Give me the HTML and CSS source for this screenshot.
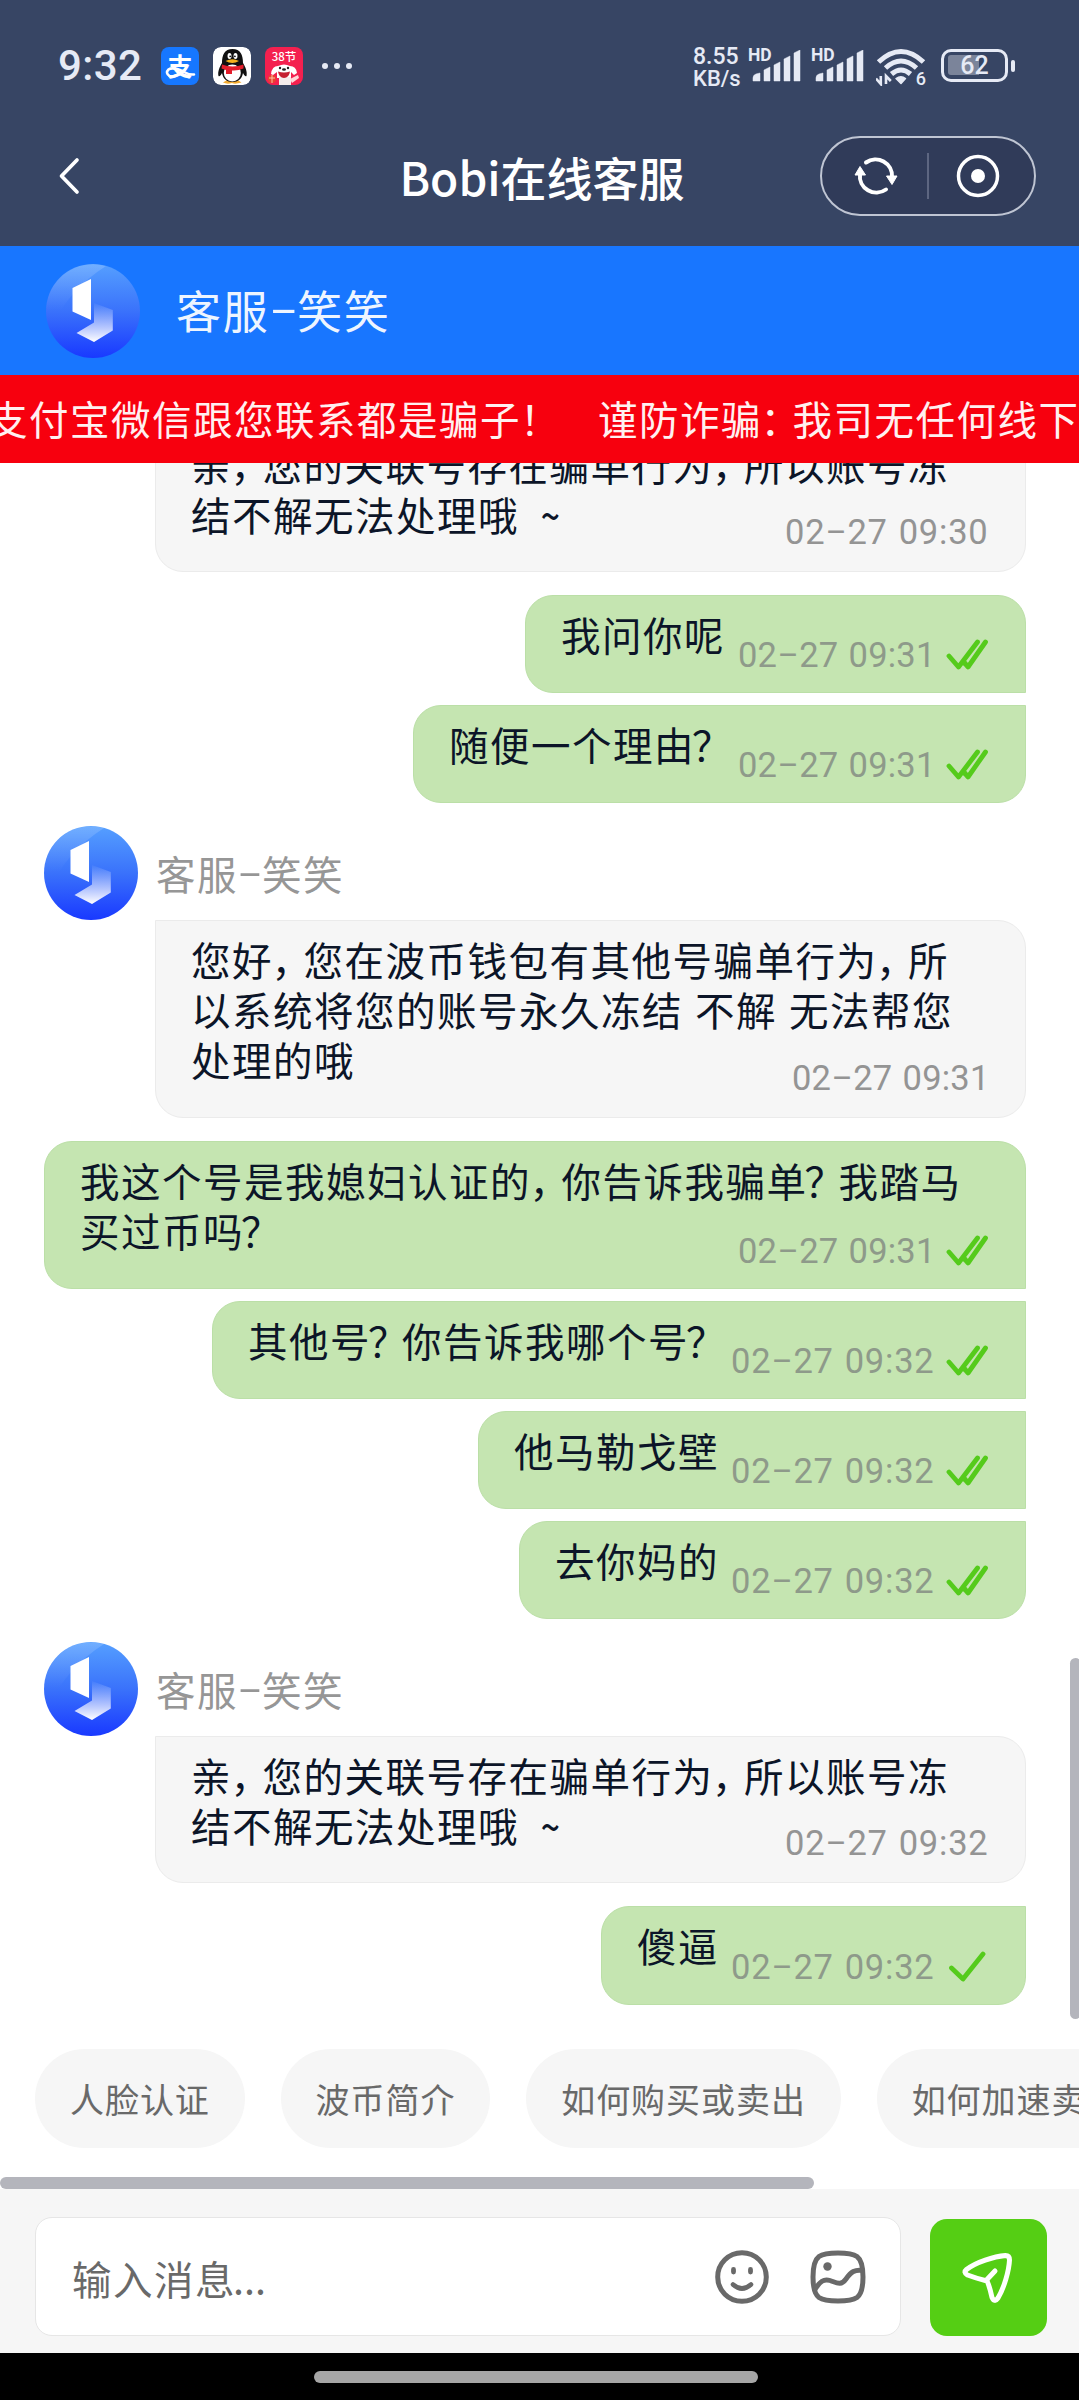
FILE: index.html
```html
<!DOCTYPE html>
<html lang="zh-CN">
<head>
<meta charset="utf-8">
<title>Bobi在线客服</title>
<link rel="stylesheet" href="styles.css">
</head>
<body>
<svg class="defs" width="0" height="0" aria-hidden="true">
  <defs>
    <linearGradient id="disc" x1="0" y1="0" x2="0" y2="1">
      <stop offset="0" stop-color="#559fff"/><stop offset=".5" stop-color="#3a72fb"/><stop offset="1" stop-color="#1939ff"/>
    </linearGradient>
    <linearGradient id="shine" x1="0" y1="0" x2="0" y2="1">
      <stop offset="0" stop-color="#fff" stop-opacity=".17"/><stop offset=".7" stop-color="#fff" stop-opacity="0"/>
    </linearGradient>
    <linearGradient id="fold" x1="0" y1="0" x2="0" y2="1">
      <stop offset="0" stop-color="#fff" stop-opacity=".03"/><stop offset=".45" stop-color="#fff" stop-opacity=".48"/><stop offset="1" stop-color="#fff"/>
    </linearGradient>
    <symbol id="logo" viewBox="0 0 94 94">
      <circle cx="47" cy="47" r="47" fill="url(#disc)"/>
      <path d="M60 2A47 47 0 0 0 4 66Q22 26 60 2Z" fill="url(#shine)"/>
      <path d="M48 39L66.8 46V66.5L48 78L30.5 69L48 58.5Z" fill="url(#fold)"/>
      <path d="M26.5 24L45 15V56L26.5 47.5Z" fill="#fff"/>
    </symbol>
    <symbol id="read" viewBox="0 0 42 32">
      <path d="M3 17L12.5 28L31.5 3M19 24.5L22 28L39.5 3" fill="none" stroke="#55cb1b" stroke-width="4.8" stroke-linecap="round" stroke-linejoin="round"/>
      <path d="M17 26L20 22" stroke="#55cb1b" stroke-width="4"/>
    </symbol>
    <symbol id="sent" viewBox="0 0 42 32">
      <path d="M5.500 17L17 28L37 3" fill="none" stroke="#55cb1b" stroke-width="4.8" stroke-linecap="round" stroke-linejoin="round"/>
    </symbol>
    <symbol id="signal" viewBox="0 0 50 32">
      <path d="M1 31V28Q1 25 4 24L8 23V31ZM12 31V20L18 17V31ZM22 31V15L28 12V31ZM32 31V9L38 6V31ZM42 31V3L48 0V31Z" fill="#e6eaf5" stroke="#e6eaf5" stroke-width=".5" stroke-linejoin="round"/>
    </symbol>
  </defs>
</svg>
<div class="phone">
  <header class="top">
    <div class="status">
      <span class="clock">9:32</span>
      <div class="apps">
        <span class="app alipay"><span class="zhi">支</span><svg class="swash" viewBox="0 0 38 38"><path d="M22 24Q14 31 8.500 29Q4 26 7.500 22.500Q12 19.500 22 24.500Q28 28 33 27.500" fill="none" stroke="#fff" stroke-width="2.600" stroke-linecap="round"/></svg></span>
        <svg class="app" viewBox="0 0 38 38">
          <rect width="38" height="38" rx="8" fill="#fff"/>
          <path d="M10 35.5Q14 32 19 33Q25 32 28.500 35.500Q22 37.500 19 36Q14 37.500 10 35.500Z" fill="#f4ac32"/>
          <path d="M19.500 2C11.500 2 9 8 9 16C6.500 20 4.500 25 5.500 29C6.500 30 8 28 9 26C10 32 14 35 19.500 35C25 35 29 32 30 26C31 28 32.500 30 33.500 29C34.500 25 32.500 20 30 16C30 8 27.500 2 19.500 2Z" fill="#111"/>
          <ellipse cx="19.300" cy="26" rx="8.500" ry="8.500" fill="#fff"/>
          <ellipse cx="16.500" cy="9" rx="2" ry="3" fill="#fff"/><ellipse cx="22.500" cy="9" rx="2" ry="3" fill="#fff"/>
          <circle cx="17.200" cy="9.300" r=".9" fill="#111"/><circle cx="21.900" cy="9.300" r=".9" fill="#111"/>
          <path d="M12.500 14Q19.500 10.500 26 14Q19.500 18 12.500 14Z" fill="#f4b21e"/>
          <path d="M9 17.500Q19.500 21.500 30.500 17.500V21.500Q25 24 19 23.500V27H13V23L8.500 21.500Z" fill="#e31d2b"/>
        </svg>
        <span class="app mall">
          <span class="fest">38节</span>
          <svg class="dog" viewBox="0 0 38 22">
            <path d="M6 11Q7 3 13 3Q19 0 25 3Q31 3 32 10L29 12L26 9V15H12V9L8 12Z" fill="#fff"/>
            <path d="M14 22V14H26V22Z" fill="#f4eded"/><path d="M25 16L33 12L34 15L27 20Z" fill="#ffd7d9"/>
            <path d="M13 8.500Q19 10.500 25 8.500Q24 15 19 15Q14 15 13 8.500Z" fill="#c52031"/>
            <circle cx="15" cy="5" r="1.200" fill="#222"/><circle cx="23" cy="5" r="1.200" fill="#222"/><ellipse cx="19" cy="6.500" rx="2" ry="1.300" fill="#222"/>
            <circle cx="7" cy="16" r="4" fill="#e8432f"/><path d="M4 15H10M7 12V20" stroke="#ffc2a0" stroke-width="1"/>
          </svg>
        </span>
      </div>
      <svg class="more" width="30" height="8" viewBox="0 0 30 8"><g fill="#e6eaf5"><circle cx="3" cy="4" r="3"/><circle cx="15" cy="4" r="3"/><circle cx="27" cy="4" r="3"/></g></svg>
      <div class="speed"><span>8.55</span><span>KB/s</span></div>
      <div class="cell"><span class="hd">HD</span><svg class="bars"><use href="#signal"/></svg></div>
      <div class="cell"><span class="hd">HD</span><svg class="bars"><use href="#signal"/></svg></div>
      <div class="wifi">
        <svg width="50" height="38" viewBox="0 0 50 38">
          <g fill="none" stroke="#e6eaf5" stroke-width="5"><path d="M2.500 14Q25 -7 47.500 14"/><path d="M9.500 20Q25 6 40.500 20"/><path d="M15.500 26Q25 18 34.500 26"/></g>
          <path d="M20 30.500Q25 27 29.500 30.500L25 35.500Z" fill="#e6eaf5" stroke="#e6eaf5" stroke-width="1.500" stroke-linejoin="round"/>
          <path d="M4.800 28V36L0 30.500M10 36V28L14.800 33" fill="none" stroke="#e6eaf5" stroke-width="2.600"/>
        </svg>
        <span class="six">6</span>
      </div>
      <div class="battery"><span>62</span></div>
      <i class="nub"></i>
    </div>
    <div class="nav">
      <svg class="back" width="22" height="38" viewBox="0 0 22 38"><path d="M19 3L3.500 19L19 35" fill="none" stroke="#fff" stroke-width="3.700" stroke-linecap="round" stroke-linejoin="round"/></svg>
      <h1>Bobi在线客服</h1>
      <div class="capsule">
        <svg width="46" height="42" viewBox="0 0 46 42">
          <g fill="none" stroke="#fff" stroke-width="4" stroke-linecap="round"><path d="M13 7.500A16.500 16.500 0 0 1 39 22"/><path d="M33 34.500A16.500 16.500 0 0 1 7 19"/></g>
          <path d="M33.500 21H44L39 29.500ZM2 20H12.500L7 11.500Z" fill="#fff" stroke="#fff" stroke-linejoin="round"/>
        </svg>
        <i class="split"></i>
        <svg width="44" height="44" viewBox="0 0 44 44"><circle cx="22" cy="22" r="19.500" fill="none" stroke="#fff" stroke-width="3.500"/><circle cx="22" cy="22" r="7" fill="#fff"/></svg>
      </div>
    </div>
  </header>

  <div class="agent">
    <svg class="avatar"><use href="#logo"/></svg>
    <span>客服<b class="dash">-</b>笑笑</span>
  </div>

  <div class="marquee">
    <span>支付宝微信跟您联系都是骗子<b class="ex">！</b></span>
    <span class="second">谨防诈骗<b class="cm">：</b>我司无任何线下</span>
  </div>

  <main class="chat">
    <section class="group">
      <div class="bubble in tall2">
        <p>亲<b class="cm">，</b>您的关联号存在骗单行为<b class="cm">，</b>所以账号冻<br>结不解无法处理哦&nbsp; <b class="tilde">~</b></p>
        <time>02<b class="hy">-</b>27 09:30</time>
      </div>
    </section>
    <section class="group">
      <div class="bubble out first w501"><p>我问你呢</p><time class="one">02<b class="hy">-</b>27 09:31</time><svg class="tick"><use href="#read"/></svg></div>
      <div class="bubble out last w613"><p>随便一个理由<b class="qm">？</b></p><time class="one">02<b class="hy">-</b>27 09:31</time><svg class="tick"><use href="#read"/></svg></div>
    </section>
    <section class="group">
      <div class="who"><svg class="avatar"><use href="#logo"/></svg><span>客服<b class="dash">-</b>笑笑</span></div>
      <div class="bubble in tall3">
        <p>您好<b class="cm">，</b>您在波币钱包有其他号骗单行为<b class="cm">，</b>所<br>以系统将您的账号永久冻结 不解 无法帮您<br>处理的哦</p>
        <time class="one">02<b class="hy">-</b>27 09:31</time>
      </div>
    </section>
    <section class="group">
      <div class="bubble out first w982 two">
        <p>我这个号是我媳妇认证的<b class="cm">，</b>你告诉我骗单<b class="qm">？</b>我踏马<br>买过币吗<b class="qm">？</b></p>
        <time class="one">02<b class="hy">-</b>27 09:31</time><svg class="tick"><use href="#read"/></svg>
      </div>
      <div class="bubble out mid w814"><p>其他号<b class="qm">？</b>你告诉我哪个号<b class="qm">？</b></p><time>02<b class="hy">-</b>27 09:32</time><svg class="tick"><use href="#read"/></svg></div>
      <div class="bubble out mid w548"><p>他马勒戈壁</p><time>02<b class="hy">-</b>27 09:32</time><svg class="tick"><use href="#read"/></svg></div>
      <div class="bubble out last w507"><p>去你妈的</p><time>02<b class="hy">-</b>27 09:32</time><svg class="tick"><use href="#read"/></svg></div>
    </section>
    <section class="group">
      <div class="who"><svg class="avatar"><use href="#logo"/></svg><span>客服<b class="dash">-</b>笑笑</span></div>
      <div class="bubble in tall2">
        <p>亲<b class="cm">，</b>您的关联号存在骗单行为<b class="cm">，</b>所以账号冻<br>结不解无法处理哦&nbsp; <b class="tilde">~</b></p>
        <time>02<b class="hy">-</b>27 09:32</time>
      </div>
    </section>
    <section class="group">
      <div class="bubble out last w425"><p>傻逼</p><time>02<b class="hy">-</b>27 09:32</time><svg class="tick"><use href="#sent"/></svg></div>
    </section>
    <i class="vbar"></i>
  </main>

  <div class="quick">
    <button>人脸认证</button><button>波币简介</button><button>如何购买或卖出</button><button>如何加速卖出</button>
  </div>
  <i class="hbar"></i>

  <footer class="compose">
    <div class="field">
      <span class="hint">输入消息<b class="dots">...</b></span>
      <svg width="54" height="56" viewBox="0 0 54 56" fill="none" stroke="#696969" stroke-linecap="round">
        <circle cx="27" cy="28" r="24.300" stroke-width="5"/><path d="M18 35.500Q27 43.500 36 35.500" stroke-width="4.600"/>
        <path d="M18.500 20.500V23M35.500 20.500V23" stroke-width="4.800"/>
      </svg>
      <svg width="56" height="54" viewBox="0 0 56 54" fill="none" stroke="#696969" stroke-width="5">
        <path d="M28 3Q42 3 47 6.500Q53 11 53 27Q53 43 47 47.500Q42 51 28 51Q14 51 9 47.500Q3 43 3 27Q3 11 9 6.500Q14 3 28 3Z"/>
        <path d="M4 41C10 31 14 28.500 20 30.500C27 33 31 36 36 29C41 22 45 19 53 20.500"/>
        <circle cx="17.500" cy="16.500" r="4.200" fill="#696969" stroke="none"/>
      </svg>
    </div>
    <div class="send">
      <svg width="52" height="52" viewBox="0 0 52 52" fill="none" stroke="#fff" stroke-width="5" stroke-linecap="round" stroke-linejoin="round">
        <path d="M5.500 17.500C15 10 33 4.500 44.500 3.500Q48.500 3.500 48.500 8C48 19 43 36 37 46Q33.500 51 31 45.500C29.500 39 28.500 34 26 29C20 27.500 13 25.500 6.500 23Q2 20.500 5.500 17.500Z"/><path d="M26 27.500L34 19"/>
      </svg>
    </div>
  </footer>
  <div class="gesture"><i></i></div>
</div>
</body>
</html>
```
FILE: styles.css
```css
* { box-sizing: border-box; }
body { margin: 0; background: #fff; font-family: "Noto Sans CJK SC", sans-serif; }
p, h1 { margin: 0; }
b { font-weight: inherit; }
svg { display: block; flex: none; }
.defs { position: absolute; }
.phone { width: 1079px; height: 2400px; display: flex; flex-direction: column; overflow: hidden; }
.phone > * { flex: none; }

/* status bar and title bar */
.top { height: 246px; background: #374564; color: #e6eaf5; }
.status { height: 128px; padding: 46px 0 0 58px; display: flex; align-items: flex-start; }
.clock { width: 103px; font: 500 42px/40px Roboto, sans-serif; letter-spacing: .4px; }
.apps { display: flex; gap: 14px; padding-top: 1px; }
.app { width: 38px; height: 38px; border-radius: 8px; }
.alipay { background: #1677ff; color: #fff; display: grid; justify-items: center; }
.alipay > * { grid-area: 1 / 1; }
.zhi { font: 700 25px/36px "Noto Sans CJK SC", sans-serif; height: 38px; }
.swash { width: 38px; height: 38px; }
.mall { background: #f4204f; color: #fff; }
.fest { display: block; text-align: center; font: 500 11.500px/18px "Noto Sans CJK SC", sans-serif; height: 16px; }
.dog { width: 38px; height: 22px; }
.more { margin: 16px 0 0 19px; }
.speed { margin: 0 0 0 341px; width: 55px; display: flex; flex-direction: column; font: 500 23px/21.500px Roboto, sans-serif; }
.speed span:last-child { font-size: 22px; }
.cell { width: 63px; display: grid; }
.cell > * { grid-area: 1 / 1; }
.hd { font: 700 17.500px/17px Roboto, sans-serif; padding-top: 1px; }
.bars { width: 50px; height: 32px; margin: 4px 0 0 4px; }
.wifi { width: 67px; display: grid; padding: 2px 0 0 2px; }
.wifi > * { grid-area: 1 / 1; }
.six { justify-self: end; align-self: end; font: 500 18px/17px Roboto, sans-serif; padding-right: 15px; margin-bottom: -1px; }
.battery { width: 67px; height: 33px; margin-top: 3px; border: 3.500px solid #e6eaf5; border-radius: 10px; padding: 3px 4px; }
.battery span { display: block; height: 20px; border-radius: 3px; background: linear-gradient(90deg, #7b849a 58%, transparent 58%); text-align: center; font: 500 25px/21px Roboto, sans-serif; }
.nub { width: 4px; height: 12px; margin: 14px 0 0 3px; border-radius: 2px; background: #e6eaf5; }
.nav { height: 118px; display: grid; grid-template-columns: 260px 1fr 260px; padding-top: 8px; align-items: start; color: #fff; }
.back { margin: 21px 0 0 58px; }
h1 { text-align: center; font-size: 46px; line-height: 80px; font-weight: 500; padding-left: 5px; }
.capsule { width: 216px; height: 80px; border: 2px solid #bfc5d3; border-radius: 40px; background: #303b59; display: flex; align-items: center; padding-left: 31px; margin-left: 1px; }
.split { width: 2px; height: 46px; background: #5d6681; margin: 0 27px 0 28px; }

/* agent bar and scam warning */
.agent { height: 129px; background: #1876ff; display: flex; align-items: center; padding-left: 46px; color: #eef5ff; font-size: 45px; letter-spacing: 1.800px; line-height: 60px; }
.agent span { margin: -2px 0 0 36px; }
.avatar { width: 94px; height: 94px; }
.dash { display: inline-block; width: .610em; text-align: center; letter-spacing: 0; line-height: 1; transform: scaleX(1.850); vertical-align: .090em; }
.marquee { height: 88px; background: #f7000e; color: #fff0f0; font-size: 39.500px; letter-spacing: 1.500px; line-height: 84px; white-space: nowrap; display: flex; overflow: hidden; padding-top: 1px; }
.marquee span { flex: none; margin-left: -12px; width: 610px; }
.marquee .second { margin-left: 0; }
.ex { margin-left: -1px; }

/* conversation */
.chat { height: 1556px; position: relative; overflow: hidden; display: flex; flex-direction: column; justify-content: flex-end; gap: 23px; padding: 0 53px 14px 44px; background: #fff; }
.group { display: flex; flex-direction: column; gap: 12px; align-items: flex-end; flex: none; }
.who { align-self: flex-start; height: 94px; margin-bottom: -12px; display: flex; align-items: center; gap: 18px; color: #969696; font-size: 39.500px; letter-spacing: 1.500px; line-height: 60px; }
.bubble { display: grid; grid-template-columns: minmax(0, 1fr) auto auto; color: #0c1528; font-size: 39.500px; letter-spacing: 1.500px; word-spacing: 1.600px; line-height: 50px; white-space: nowrap; padding: 13px 37px 0 35px; border: 1px solid #ebebeb; }
.in { width: 871px; background: #f6f6f6; border-radius: 0 28px 28px 28px; }
.tall2 { height: 147px; }
.tall3 { height: 198px; }
.out { height: 98px; background: #c5e5b1; border-color: #bbdfa7; border-radius: 28px; }
.first { border-bottom-right-radius: 0; }
.mid { border-top-right-radius: 0; border-bottom-right-radius: 0; }
.last { border-top-right-radius: 0; }
.two { height: 148px; }
.w425 { width: 425px; height: 99px; }
.w501 { width: 501px; }
.w507 { width: 507px; }
.w548 { width: 548px; }
.w613 { width: 613px; }
.w814 { width: 814px; }
.w982 { width: 982px; }
.bubble p { grid-area: 1 / 1; }
.bubble time { grid-area: 1 / 2; align-self: end; margin-bottom: 19px; font: 400 34.500px/40px Roboto, sans-serif; letter-spacing: .800px; word-spacing: 1.500px; color: #949494; width: 203px; }
.out time { margin-bottom: 17px; color: #8e9a8a; }
.bubble .one { letter-spacing: .200px; width: 196px; }
.tick { grid-area: 1 / 3; width: 42px; height: 32px; align-self: end; margin: 0 0 21px 12px; }
.hy { display: inline-block; width: 22px; text-align: center; transform: scaleX(1.900); vertical-align: 2px; letter-spacing: 0; line-height: 30px; }
.cm { margin-left: -1.500px; letter-spacing: -7.500px; }
.qm { margin-left: -3px; letter-spacing: -5.500px; }
.tilde { display: inline-block; font-weight: 500; transform: scaleX(.850); margin-left: -4px; }
.vbar { position: absolute; right: -2px; top: 1195px; width: 11px; height: 361px; border-radius: 6px; background: #b4b5bc; }

/* quick questions */
.quick { height: 158px; padding: 30px 0 0 35px; display: flex; gap: 36px; overflow: hidden; background: #fff; }
.quick button { flex: none; height: 99px; border: 0; border-radius: 50px; padding: 0 34.800px 0 35px; background: #f6f6f6; color: #696969; font: 400 34px/96px "Noto Sans CJK SC", sans-serif; letter-spacing: .950px; }
.hbar { width: 814px; height: 12px; border-radius: 6px; background: #b4b5bc; }

/* message input */
.compose { height: 164px; background: #f6f6f6; display: flex; padding: 28px 32px 0 35px; gap: 29px; align-items: flex-start; }
.field { width: 866px; height: 119px; border: 1px solid #e6e6e6; border-radius: 17px; background: #fff; display: flex; align-items: center; padding: 0 34px 0 36px; gap: 41px; }
.hint { flex: 1; color: #696969; font-size: 39.500px; letter-spacing: 1.500px; line-height: 60px; padding-top: 3px; }
.dots { letter-spacing: 0; margin-left: -3px; }
.send { width: 117px; height: 117px; margin-top: 2px; border-radius: 17px; background: #55ce14; display: grid; place-items: center; padding-right: 3px; }
.gesture { height: 47px; background: #000; padding-top: 18px; }
.gesture i { display: block; width: 444px; height: 12px; margin-left: 314px; border-radius: 6px; background: #a6a6a6; }
```
